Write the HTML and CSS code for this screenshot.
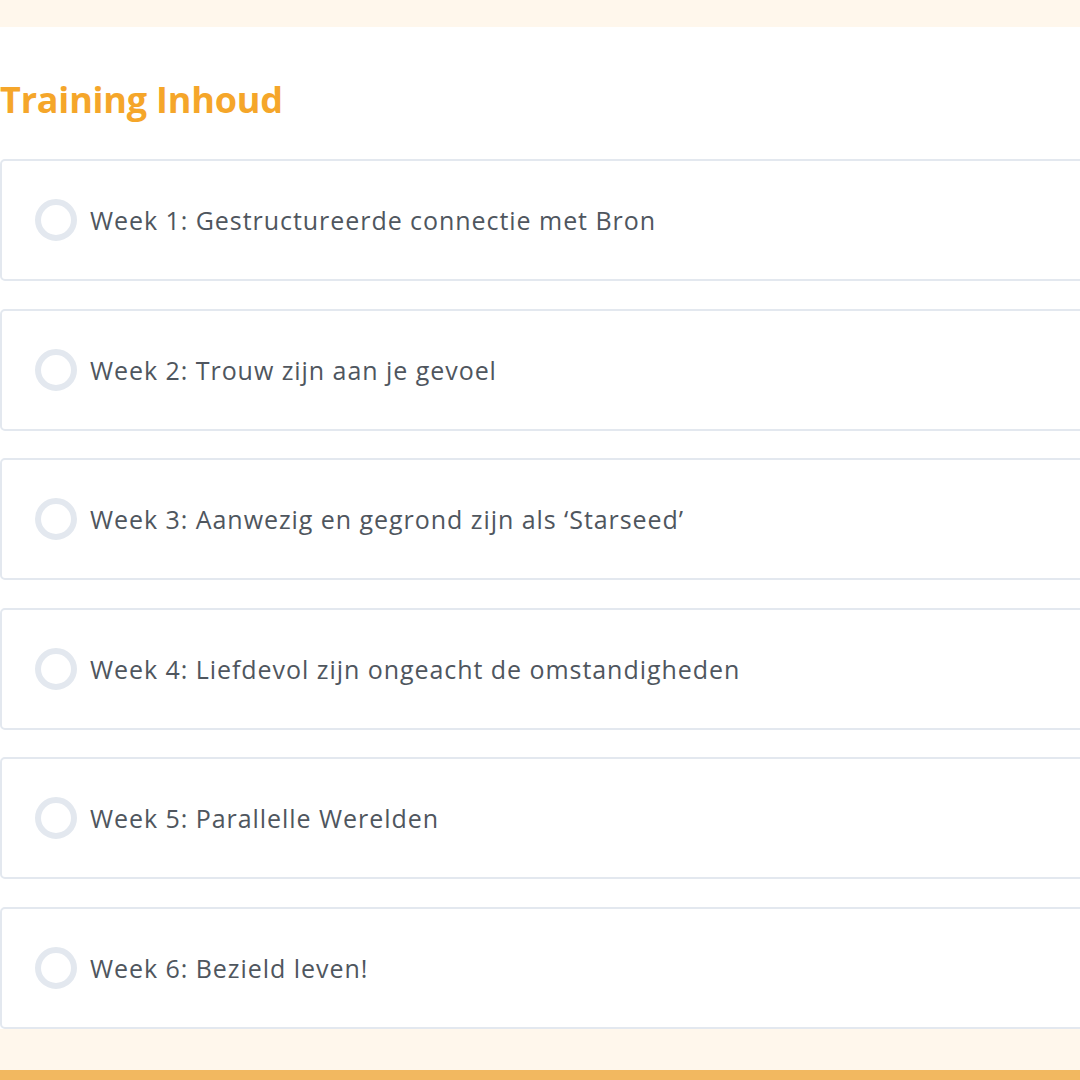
FILE: index.html
```html
<!DOCTYPE html>
<html lang="nl">
<head>
    <meta charset="UTF-8" />
    <meta name="viewport" content="width=device-width, initial-scale=1.0"/>
    <title>Training Inhoud</title>
    <link rel="stylesheet" href="styles.css">
</head>
<body>
    <div class="top-band"></div>

    <section class="content">
        <h2>Training Inhoud</h2>

        <ul class="lessons">
            <li class="lesson"><span class="check"></span>Week 1: Gestructureerde connectie met Bron</li>
            <li class="lesson"><span class="check"></span>Week 2: Trouw zijn aan je gevoel</li>
            <li class="lesson"><span class="check"></span>Week 3: Aanwezig en gegrond zijn als ‘Starseed’</li>
            <li class="lesson"><span class="check"></span>Week 4: Liefdevol zijn ongeacht de omstandigheden</li>
            <li class="lesson"><span class="check"></span>Week 5: Parallelle Werelden</li>
            <li class="lesson"><span class="check"></span>Week 6: Bezield leven!</li>
        </ul>
    </section>

    <div class="bottom-band"></div>
    <div class="footer-bar"></div>
</body>
</html>
```

FILE: styles.css
```css
html,
body {
    margin: 0;
    padding: 0;
    overflow: hidden;
}

body {
    font-family: 'Open Sans', 'Lato', sans-serif;
    background-color: #fff;
    color: #4f565e;
}

.top-band {
    height: 27px;
    background-color: #fff7ec;
}

.content {
    width: 1120px;
    padding: 50px 0 0 0;
}

h2 {
    margin: 0 0 36px 0;
    font-size: 36px;
    line-height: 46px;
    font-weight: 700;
    letter-spacing: -0.2px;
    color: #f5a62a;
}

.lessons {
    list-style: none;
    margin: 0;
    padding: 0;
    display: flex;
    flex-direction: column;
    gap: 27.5px;
}

.lesson {
    display: flex;
    align-items: center;
    gap: 13px;
    height: 122px;
    box-sizing: border-box;
    padding-left: 33px;
    border: 2px solid #e3e8ef;
    border-radius: 5px;
    font-size: 25px;
    letter-spacing: 0.95px;
}

.check {
    width: 42px;
    height: 42px;
    box-sizing: border-box;
    border: 6px solid #e3e8ef;
    border-radius: 50%;
    flex-shrink: 0;
}

.bottom-band {
    height: 41px;
    background-color: #fff7ec;
}

.footer-bar {
    height: 11px;
    background-color: #f2b860;
}
```
